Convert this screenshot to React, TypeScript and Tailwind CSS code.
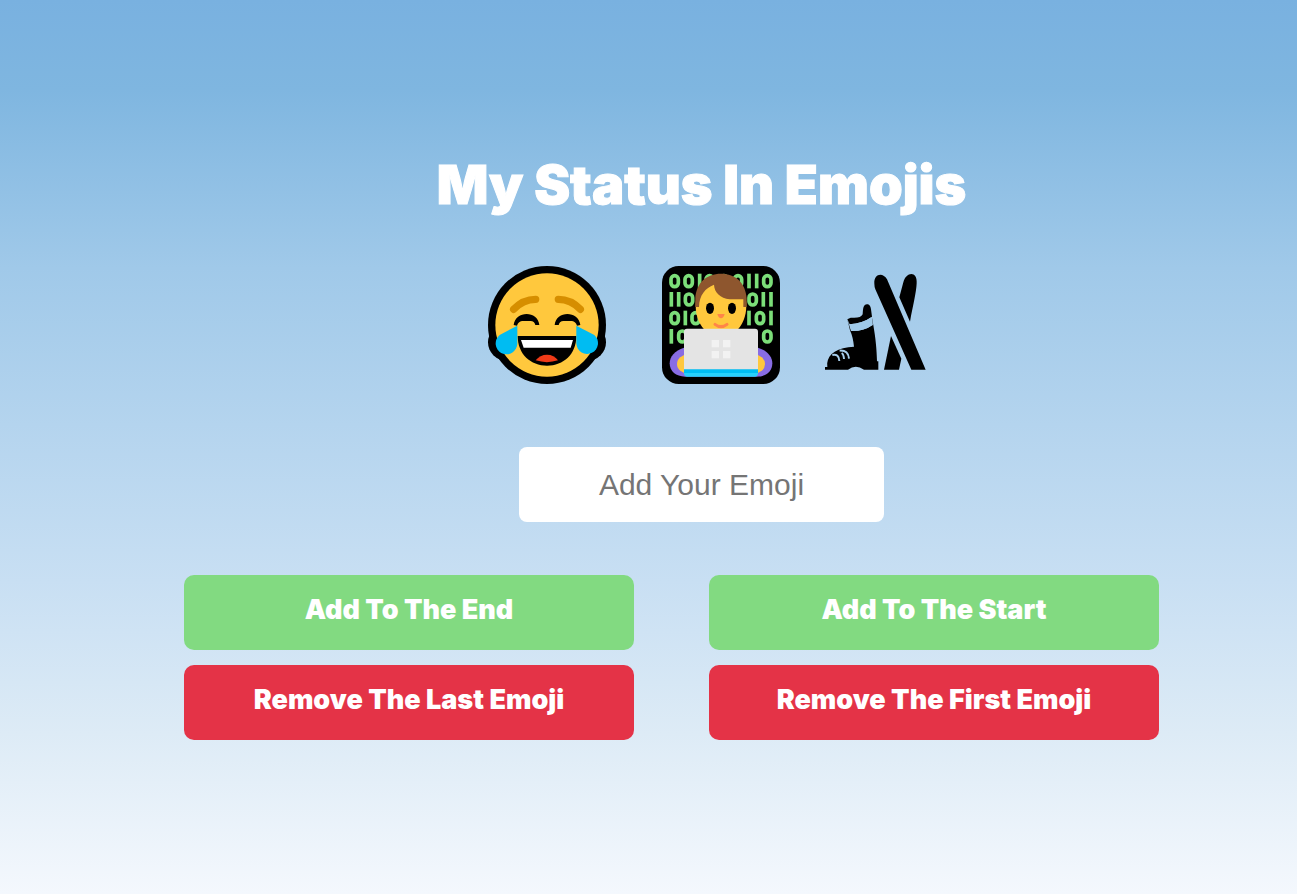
import React, { useState } from "react";

function JoyEmoji() {
  return (
    <svg role="img" aria-label="Face with tears of joy" viewBox="24 24 354 354" className="size-[118px]">
      <circle cx="201" cy="201" r="177" />
      <circle cx="79" cy="253" r="55" />
      <circle cx="323" cy="253" r="55" />
      <circle cx="201" cy="201" r="155" fill="#FFC83D" />
      <g fill="none" stroke="#D68E00" strokeWidth="22" strokeLinecap="round">
        <path d="M101 154Q129 124 167 124" />
        <path d="M301 154Q273 124 235 124" />
      </g>
      <path d="M101 201C106 157 174 157 178 201H166Q163 189 152 189H126Q115 191 111 203Z" />
      <path d="M301 201C296 157 228 157 224 201H236Q239 189 250 189H276Q287 191 291 203Z" />
      <path d="M113 234H289C289 289 250 323 201 323S113 289 113 234Z" />
      <path d="M123 246H279L272 269H131Z" fill="#fff" />
      <path d="M167 307Q180 290 201 290T234 307Q201 318 167 307Z" fill="#F03A17" />
      <path d="M112 203V257A32.500 32.500 0 1 1 59 231Z" fill="#00BCF2" />
      <path d="M289 203V257A32.500 32.500 0 1 0 343 231Z" fill="#00BCF2" />
    </svg>
  );
}

const zeros = [
  [62, 69], [104, 69], [167, 69], [210, 69], [252, 69], [340, 69],
  [105, 124], [296, 124],
  [62, 180], [125, 180], [318, 180],
  [85, 235], [340, 235],
];
const ones = [
  [137, 69], [285, 69], [308, 69],
  [52, 124], [74, 124], [328, 124], [351, 124],
  [94, 180], [285, 180], [351, 180],
  [52, 235],
];

function CoderEmoji() {
  return (
    <svg role="img" aria-label="Man technologist" viewBox="24 24 354 354" className="size-[118px]">
      <rect x="24" y="24" width="354" height="354" rx="50" />
      <g fill="none" stroke="#7CDE79" strokeWidth="11">
        {zeros.map(([x, y]) => (
          <rect key={`${x}-${y}`} x={x - 11} y={y - 16} width="22" height="33" rx="11" />
        ))}
        {ones.map(([x, y]) => (
          <path key={`${x}-${y}`} d={`M${x} ${y - 22}v44`} />
        ))}
      </g>
      <path d="M90 269C62 278 47 296 47 316C47 340 66 356 93 356H309C337 356 355 340 355 316C355 296 340 278 312 269Z" fill="#886CE4" />
      <ellipse cx="103" cy="318" rx="34" ry="29" fill="#FFC83D" />
      <ellipse cx="299" cy="318" rx="34" ry="29" fill="#FFC83D" />
      <path d="M125 140C125 40 277 40 277 140C277 178 265 201 244 222H158C137 201 125 178 125 140Z" fill="#FFC83D" />
      <path d="M124 147V121C127 75 157 47 201 47S275 75 278 121V147H268V124H227C199 120 181 104 180 80C154 90 136 111 135 147Z" fill="#8E562E" />
      <ellipse cx="168" cy="151" rx="12" ry="17" />
      <ellipse cx="234" cy="151" rx="12" ry="17" />
      <path d="M190 168H212Q208 181 201 181T190 168Z" fill="#FF8548" />
      <path d="M183 199Q201 213 219 199" fill="none" stroke="#FF8548" strokeWidth="9" strokeLinecap="round" />
      <rect x="90" y="212" width="222" height="138" rx="9" fill="#E4E4E4" />
      <path d="M90 334H312V345H90Z" fill="#00BCF2" />
      <path d="M90 345H312Q312 356 302 356H100Q90 356 90 345Z" fill="#28D0FA" />
      <path d="M173 246h22v22h-22zM207 246h22v22h-22zM173 279h22v22h-22zM207 279h22v22h-22z" fill="#F2F2F2" />
    </svg>
  );
}

function SkiEmoji() {
  return (
    <svg role="img" aria-label="Skis and ski boot" viewBox="30 12 306 354" className="h-[118px] w-[102px]">
      <path d="M178 65C176 34 204 30 216 52L332 323H289L181 82Q178 73 178 65Z" />
      <path d="M253 106L265 61C273 28 308 26 305 64C304 91 294 130 285 179Z" />
      <path d="M228 222L259 290L252 323H207Z" />
      <path d="M97 172L107 167Q137 170 143 157C144 140 145 127 156 127C165 127 167 135 168 142L171 164Q143 184 104 187Z" />
      <path d="M97 172L108 207Q146 208 173 189L170 162L175 190C182 230 185 262 186 298H190V323H147Q122 306 99 323H30V315H37C33 285 55 262 100 256L117 254Q114 225 105 205Z" />
      <path d="M104 187L109 207Q146 208 173 189L170 165Q143 184 104 187Z" fill="#9FC9E8" />
      <path d="M52 279Q72 275 73 297M74 266Q100 264 102 290M80 273Q86 277 87 291" fill="none" stroke="#A6CDEA" strokeWidth="6" />
    </svg>
  );
}

function StatusButton({ tone, children }: { tone: "add" | "remove"; children: React.ReactNode }) {
  return (
    <button
      type="button"
      className={`h-[75px] cursor-pointer rounded-[10px] pb-1 text-[27px] font-black text-white ${
        tone === "add" ? "bg-[#82DA81]" : "bg-[#E43347]"
      }`}
    >
      {children}
    </button>
  );
}

export default function App() {
  const [emoji, setEmoji] = useState("");
  return (
    <main className="flex min-h-screen flex-col items-center bg-[linear-gradient(#79B1E0_0%,#7FB6E0_10%,#A0C9E9_30%,#C8DFF3_65%,#DDEBF6_82%,#F4F8FD_100%)] pt-[148px] pl-[106px] font-['Inter',sans-serif]">
      <h1 className="text-[54px] leading-[74px] font-black text-white [-webkit-text-stroke:1px_white]">My Status In Emojis</h1>
      <ul className="mt-11 flex items-center gap-[34px]">
        <li className="px-[11px]"><JoyEmoji /></li>
        <li className="px-[11px]"><CoderEmoji /></li>
        <li><SkiEmoji /></li>
      </ul>
      <input
        type="text"
        aria-label="Add Your Emoji"
        placeholder="Add Your Emoji"
        value={emoji}
        onChange={(e) => setEmoji(e.target.value)}
        className="mt-[63px] h-[75px] w-[365px] rounded-[8px] bg-white text-center font-['Liberation_Sans',sans-serif] text-[30px] text-black placeholder:text-[#757575]"
      />
      <div className="mt-[53px] w-full pr-[138px] pl-[78px] pb-10">
        <div className="grid grid-cols-2 gap-x-[75px] gap-y-[15px]">
          <StatusButton tone="add">Add To The End</StatusButton>
          <StatusButton tone="add">Add To The Start</StatusButton>
          <StatusButton tone="remove">Remove The Last Emoji</StatusButton>
          <StatusButton tone="remove">Remove The First Emoji</StatusButton>
        </div>
      </div>
    </main>
  );
}
